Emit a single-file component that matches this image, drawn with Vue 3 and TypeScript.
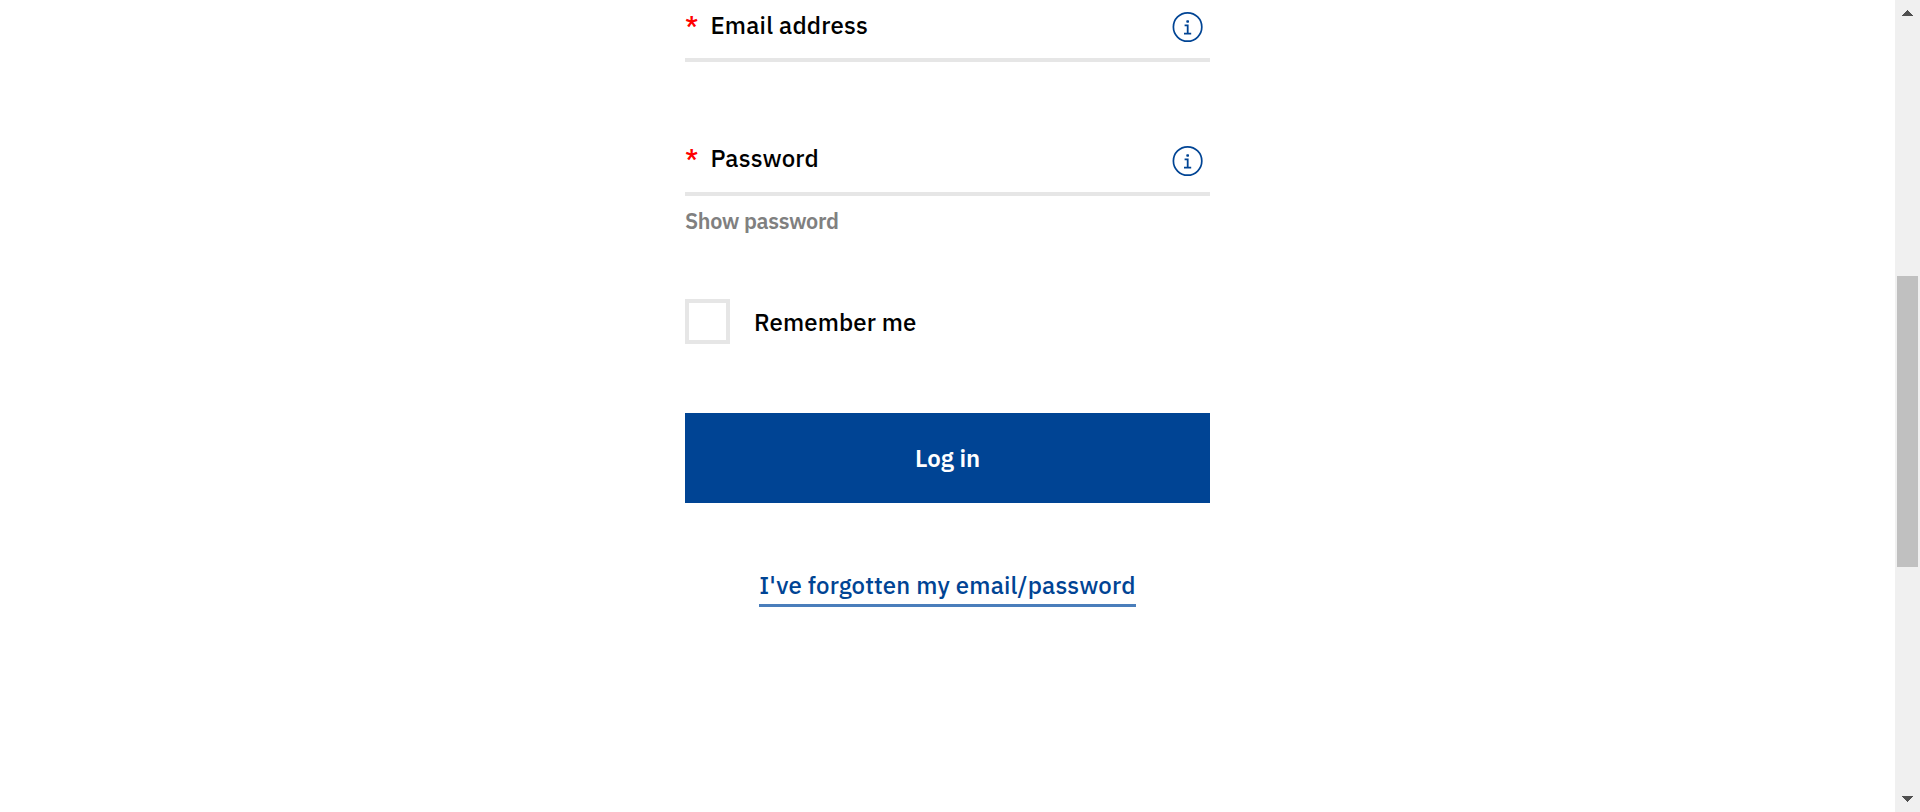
<script setup lang="ts">
import { ref } from 'vue'

interface Field {
  id: string
  label: string
}

const fields: Field[] = [
  { id: 'email', label: 'Email address' },
  { id: 'password', label: 'Password' },
]
const remember = ref(false)
</script>

<template>
  <div class="page">
    <main class="content">
      <form class="form" @submit.prevent>
        <div v-for="field in fields" :key="field.id" class="field" :class="field.id">
          <span class="required">*</span>
          <label class="label">{{ field.label }}</label>
          <svg class="info" width="32" height="32" viewBox="-0.6 0 32 32" fill="none">
            <circle cx="16" cy="16" r="14.2" stroke="#004494" stroke-width="1.7" />
            <path d="M13 14.4h3.1v7.9M12.4 22.6h7.2" stroke="#004494" stroke-width="1.8" />
            <rect x="14.7" y="9.2" width="2.7" height="2.5" rx="0.7" fill="#004494" />
          </svg>
        </div>
        <div class="show">Show password</div>
        <div class="remember" @click="remember = !remember">
          <span class="box" role="checkbox" :aria-checked="remember"></span>
          <span class="remember-text">Remember me</span>
        </div>
        <button class="submit" type="submit">Log in</button>
        <a class="forgot">I've forgotten my email/password</a>
      </form>
    </main>
    <aside class="scrollbar">
      <svg class="arrow" width="11" height="6" viewBox="0 0 11 6" shape-rendering="crispEdges"><path d="M0 6L5.5 0L11 6Z" fill="#505050" /></svg>
      <div class="thumb"></div>
      <svg class="arrow" width="11" height="6" viewBox="0 0 11 6" shape-rendering="crispEdges"><path d="M0 0L5.5 6L11 0Z" fill="#505050" /></svg>
    </aside>
  </div>
</template>

<style>
body {
  margin: 0;
  overflow: hidden;
  background: #fff;
}
</style>

<style scoped>
.page {
  display: flex;
  height: 812px;
  overflow: hidden;
  font-family: "IBM Plex Sans", "Noto Sans", sans-serif;
  font-size: 24px;
  font-weight: 500;
  line-height: 32px;
  color: #000;
}
.content {
  flex: 1;
  display: flex;
  justify-content: center;
}
.form {
  width: 525px;
  display: flex;
  flex-direction: column;
}
.field {
  display: flex;
  box-sizing: border-box;
  height: 62px;
  padding-top: 9px;
  border-bottom: 4px solid #e6e6e6;
  white-space: nowrap;
}
.password {
  height: 63px;
  margin-top: 71px;
}
.required {
  width: 25.4px;
  color: #f00;
  font-size: 26px;
}
.label {
  flex: 1;
  letter-spacing: 0.2px;
}
.info {
  margin: 2px 7px 0 0;
}
.password .info {
  margin-top: 3px;
}
.show {
  margin-top: 9px;
  font-size: 21.6px;
  letter-spacing: -0.33px;
  color: #808080;
  font-weight: 600;
}
.remember {
  display: flex;
  align-items: center;
  margin-top: 62px;
  height: 45px;
}
.remember-text {
  letter-spacing: 0.12px;
}
.box {
  box-sizing: border-box;
  width: 45px;
  height: 45px;
  margin-right: 24px;
  border: 4px solid #e6e6e6;
}
.submit {
  height: 90px;
  margin-top: 69px;
  padding: 0;
  border: 0;
  background: #004494;
  color: #fff;
  font: inherit;
  font-weight: 600;
}
.forgot {
  box-sizing: border-box;
  align-self: center;
  width: 377px;
  height: 38px;
  margin-top: 66px;
  border-bottom: 3px solid #4a7ebb;
  color: #004494;
  letter-spacing: 0.18px;
  text-align: center;
  white-space: nowrap;
}
.scrollbar {
  box-sizing: border-box;
  width: 25px;
  padding: 10px 0 10px;
  display: flex;
  flex-direction: column;
  align-items: center;
  background: #f0f0f0;
}
.thumb {
  width: 21px;
  height: 291px;
  margin-top: 260px;
  margin-bottom: auto;
  background: #c0c0c0;
}
</style>
